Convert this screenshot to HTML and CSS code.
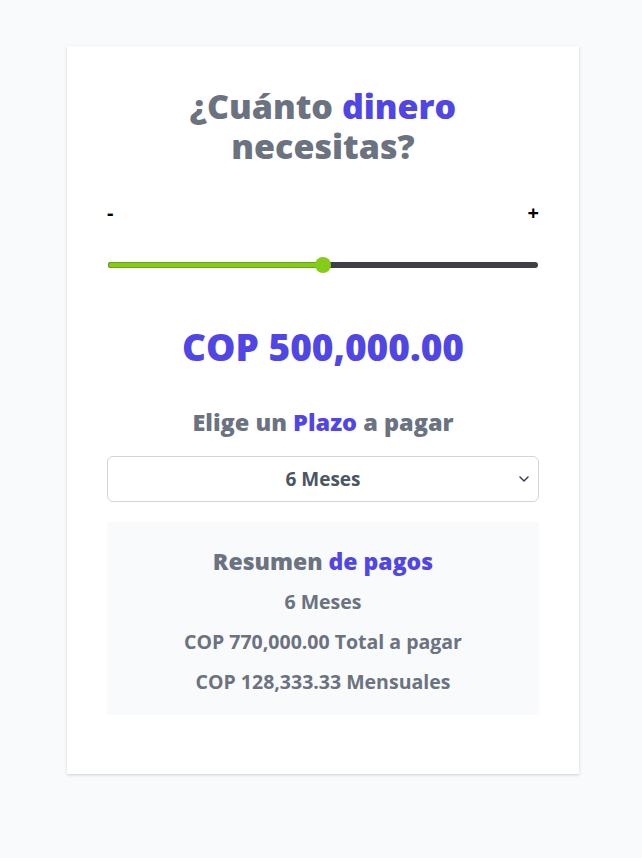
FILE: index.html
```html
<!DOCTYPE html>
<html lang="es">
<head>
<meta charset="utf-8">
<title>Préstamo</title>
<link rel="stylesheet" href="styles.css">
</head>
<body>
<main class="page">
  <section class="card">
    <h1 class="title">¿Cuánto <span class="accent">dinero</span> necesitas?</h1>
    <div class="range-labels"><span>-</span><span>+</span></div>
    <div class="slider">
      <div class="slider-fill" style="width: 50%"></div>
      <div class="slider-thumb" style="left: 50%"></div>
    </div>
    <p class="amount">COP 500,000.00</p>
    <h2 class="subtitle">Elige un <span class="accent">Plazo</span> a pagar</h2>
    <div class="select-wrap">
      <select class="select">
        <option>6 Meses</option>
        <option>12 Meses</option>
      </select>
      <svg class="chevron" width="10" height="6" viewBox="0 0 10 6"><path d="M1 1l4 4 4-4" fill="none" stroke="#374151" stroke-width="1.5" stroke-linecap="round" stroke-linejoin="round"/></svg>
    </div>
    <div class="summary">
      <h3 class="summary-title">Resumen <span class="accent">de pagos</span></h3>
      <p class="summary-line">6 Meses</p>
      <p class="summary-line">COP 770,000.00 Total a pagar</p>
      <p class="summary-line">COP 128,333.33 Mensuales</p>
    </div>
  </section>
</main>
</body>
</html>
```
FILE: styles.css
```css
* { box-sizing: border-box; }
html, body { margin: 0; padding: 0; }
body {
  background: #f9fafb;
  font-family: "Open Sans", "Noto Sans", sans-serif;
  color: #6b7280;
}
.page {
  display: flex;
  justify-content: center;
  padding: 46px 0 84px 4px;
}
.card {
  width: 512px;
  background: #fff;
  padding: 40px 40px 59px;
  box-shadow: 0 1px 3px rgba(0,0,0,0.12), 0 1px 2px rgba(0,0,0,0.06);
}
.accent { color: #4f46e5; }
.title {
  margin: 0 auto;
  max-width: 340px;
  text-align: center;
  font-size: 34px;
  line-height: 40px;
  font-weight: 800;
  color: #6b7280;
}
.range-labels {
  display: flex;
  justify-content: space-between;
  margin-top: 33px;
  font-size: 20px;
  font-weight: 700;
  color: #000;
  line-height: 28px;
}
.slider {
  position: relative;
  margin: 35px 1px 0;
  height: 6px;
  border-radius: 3px;
  background: #3f3f46;
}
.slider-fill {
  height: 6px;
  border-radius: 3px;
  background: #84cc16;
  box-shadow: inset 0 0 0 1px rgba(60,90,20,0.35);
}
.slider-thumb {
  position: absolute;
  top: 50%;
  width: 16px;
  height: 16px;
  margin: -8px 0 0 -8px;
  border-radius: 50%;
  background: #84cc16;
}
.amount {
  margin: 59px 0 0;
  text-align: center;
  font-size: 37px;
  line-height: 40px;
  font-weight: 800;
  color: #4f46e5;
}
.subtitle {
  margin: 39px 0 0;
  text-align: center;
  font-size: 23.5px;
  line-height: 32px;
  font-weight: 800;
  color: #6b7280;
}
.select-wrap {
  position: relative;
  margin-top: 18px;
}
.select {
  display: block;
  width: 100%;
  height: 46px;
  appearance: none;
  -webkit-appearance: none;
  border: 1px solid #d1d5db;
  border-radius: 6px;
  background: #fff;
  font-family: inherit;
  font-size: 19px;
  font-weight: 700;
  color: #4b5563;
  text-align: center;
  text-align-last: center;
}
.chevron {
  position: absolute;
  right: 10px;
  top: 20px;
}
.summary {
  margin-top: 20px;
  background: #f9fafb;
  padding: 23px 16px 19px;
  text-align: center;
}
.summary-title {
  margin: 0;
  font-size: 23px;
  line-height: 32px;
  font-weight: 800;
  color: #6b7280;
}
.summary-line {
  margin: 0;
  margin-top: 12px;
  font-size: 19.5px;
  line-height: 28px;
  font-weight: 700;
  color: #6b7280;
}
.summary-title + .summary-line { margin-top: 11px; }
```
